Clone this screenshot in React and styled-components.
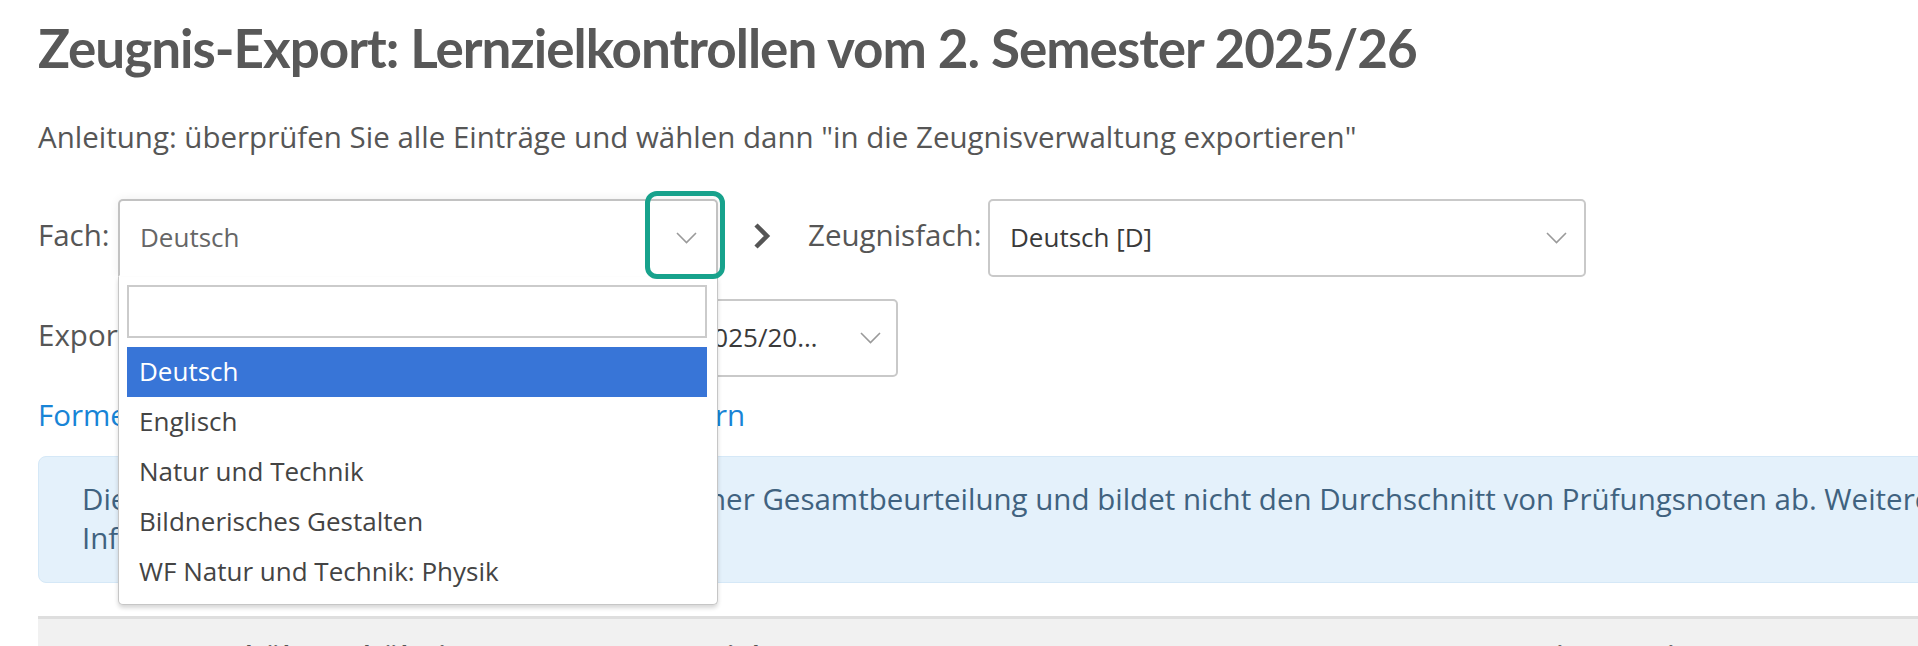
import React from "react";
import styled, { createGlobalStyle } from "styled-components";

const GlobalStyle = createGlobalStyle`
  html, body { margin: 0; padding: 0; background: #fff; overflow: hidden; }
  body { font-family: "Open Sans", "Noto Sans", sans-serif; color: #565656; }
  *, *::before, *::after { box-sizing: border-box; }
`;

const Page = styled.div`
  width: 2100px;
  padding: 18px 0 0 38px;
`;

const Title = styled.h1`
  margin: 0;
  font-family: Lato, "Open Sans", sans-serif;
  font-weight: 700;
  font-size: 53px;
  letter-spacing: -1px;
  line-height: 60px;
  color: #585858;
  white-space: nowrap;
`;

const Intro = styled.p`
  margin: 41px 0 0;
  font-size: 29.5px;
  line-height: 36px;
  white-space: nowrap;
`;

const FormRow = styled.div`
  display: flex;
  align-items: center;
  margin-top: ${(p) => p.$gap}px;
  height: 78px;
`;

const Label = styled.span`
  flex: 0 0 ${(p) => p.$w}px;
  font-size: 29.5px;
  line-height: 36px;
  padding-bottom: 6px;
  white-space: nowrap;
  overflow: hidden;
`;

const SelectWrap = styled.div`
  position: relative;
  flex: 0 0 ${(p) => p.$w}px;
  min-width: 0;
  height: 78px;
`;

const SelectBox = styled.div`
  display: flex;
  align-items: center;
  height: 78px;
  padding: 0 ${(p) => p.$pr}px 0 ${(p) => p.$pl || 20}px;
  border: 2px solid ${(p) => (p.$open ? "#c2c2c2" : "#c9c9c9")};
  border-bottom-color: ${(p) => (p.$open ? "transparent" : "#c9c9c9")};
  border-radius: ${(p) => (p.$open ? "5px 5px 0 0" : "5px")};
  box-shadow: ${(p) => (p.$open ? "0 0 10px rgba(0,0,0,0.07)" : "none")};
  background: #fff;
`;

const Value = styled.span`
  flex: 1;
  min-width: 0;
  margin-right: ${(p) => p.$mr || 0}px;
  font-size: 26px;
  line-height: 36px;
  padding-bottom: 2px;
  color: ${(p) => (p.$muted ? "#666" : "#3a3a3a")};
  white-space: nowrap;
  overflow: hidden;
  text-overflow: ellipsis;
`;

const Chevron = () => (
  <svg width="21" height="12" viewBox="0 0 21 12" style={{ flexShrink: 0 }}>
    <polyline points="1,1 10.5,10.5 20,1" fill="none" stroke="#9a9a9a" strokeWidth="1.6" />
  </svg>
);

const ArrowBox = styled.span`
  display: flex;
  flex: 0 0 18px;
  margin: 0 37px 0 35px;
  padding-bottom: 4px;
`;

const Highlight = styled.div`
  position: absolute;
  left: 527px;
  top: -8px;
  width: 80px;
  height: 88px;
  border: 5px solid #17a28c;
  border-radius: 12px;
  z-index: 20;
  pointer-events: none;
`;

const Dropdown = styled.div`
  position: absolute;
  left: 0;
  top: 78px;
  width: 600px;
  height: 328px;
  padding: 8px 10px 7px 8px;
  background: #fff;
  border: 1px solid #c6c6c6;
  border-top: none;
  border-radius: 0 0 5px 5px;
  box-shadow: 0 3px 4px rgba(0, 0, 0, 0.16);
  z-index: 10;
`;

const SearchInput = styled.input`
  display: block;
  width: 100%;
  height: 53px;
  margin: 0 0 9px;
  border: 2px solid #cbcbcb;
  outline: none;
  padding: 0 10px;
  font-family: inherit;
  font-size: 26px;
  background: #fff;
`;

const OptionList = styled.ul`
  list-style: none;
  margin: 0;
  padding: 0;
`;

const Option = styled.li`
  height: 50px;
  padding-left: 12px;
  font-size: 26px;
  line-height: 48px;
  white-space: nowrap;
  color: ${(p) => (p.$active ? "#fff" : "#444")};
  background: ${(p) => (p.$active ? "#3875d7" : "transparent")};
`;

const Link = styled.a`
  display: block;
  margin-top: 20px;
  font-size: 29.5px;
  line-height: 36px;
  color: #1884d6;
  text-decoration: none;
  white-space: nowrap;
`;

const InfoBox = styled.div`
  margin-top: 23px;
  padding: 22px 44px 25px 43px;
  background: #e4f1fb;
  border: 1px solid #d5e8f7;
  border-radius: 8px;
  color: #40627f;
  font-size: 29.5px;
  line-height: 39px;
`;

const TableHead = styled.div`
  display: grid;
  grid-template-columns: 165px 434px 697px 123px 183px 233px 1fr;
  margin-top: 33px;
  height: 80px;
  padding: 19px 0 0 11px;
  background: #f1f1f1;
  border-top: 3px solid #dedede;
`;

const HeadCell = styled.span`
  font-size: 29.5px;
  line-height: 36px;
  font-weight: 600;
  color: #555;
  white-space: nowrap;
`;

const options = [
  "Deutsch",
  "Englisch",
  "Natur und Technik",
  "Bildnerisches Gestalten",
  "WF Natur und Technik: Physik",
];

const heads = ["Typ", "Schüler/Schülerinnen", "Lernziele", "Note", "Zeugnisnote", "Fixe Note", "Fach"];

export default function App() {
  return (
    <>
      <GlobalStyle />
      <Page>
        <Title>Zeugnis-Export: Lernzielkontrollen vom 2. Semester 2025/26</Title>
        <Intro>
          Anleitung: überprüfen Sie alle Einträge und wählen dann "in die Zeugnisverwaltung exportieren"
        </Intro>

        <FormRow $gap={44}>
          <Label $w={80}>Fach:</Label>
          <SelectWrap $w={600}>
            <SelectBox $open $pr={19}>
              <Value $muted>Deutsch</Value>
              <Chevron />
            </SelectBox>
            <Highlight />
            <Dropdown>
              <SearchInput aria-label="Suche" />
              <OptionList>
                {options.map((o, i) => (
                  <Option key={o} $active={i === 0}>
                    {o}
                  </Option>
                ))}
              </OptionList>
            </Dropdown>
          </SelectWrap>
          <ArrowBox>
            <svg width="18" height="28" viewBox="0 0 18 28">
              <polyline points="3,3 14,14 3,25" fill="none" stroke="#555" strokeWidth="4.5" />
            </svg>
          </ArrowBox>
          <Label $w={180}>Zeugnisfach:</Label>
          <SelectWrap $w={598}>
            <SelectBox $pr={17}>
              <Value>Deutsch [D]</Value>
              <Chevron />
            </SelectBox>
          </SelectWrap>
        </FormRow>

        <FormRow $gap={22}>
          <Label $w={262}>Exportieren in:</Label>
          <SelectWrap $w={598}>
            <SelectBox $pr={15} $pl={45}>
              <Value $mr={42}>Zeugnisperiode: 2. Semester 2025/2026</Value>
              <Chevron />
            </SelectBox>
          </SelectWrap>
        </FormRow>

        <Link href="#">Formel für die Berechnung der Zeugnisnote ändern</Link>

        <InfoBox>
          Die vorgeschlagene Semesternote fusst auf einer Gesamtbeurteilung und bildet nicht den Durchschnitt von
          Prüfungsnoten ab. Weitere Informationen finden Sie in der Hilfe.
        </InfoBox>

        <TableHead>
          {heads.map((h) => (
            <HeadCell key={h}>{h}</HeadCell>
          ))}
        </TableHead>
      </Page>
    </>
  );
}
